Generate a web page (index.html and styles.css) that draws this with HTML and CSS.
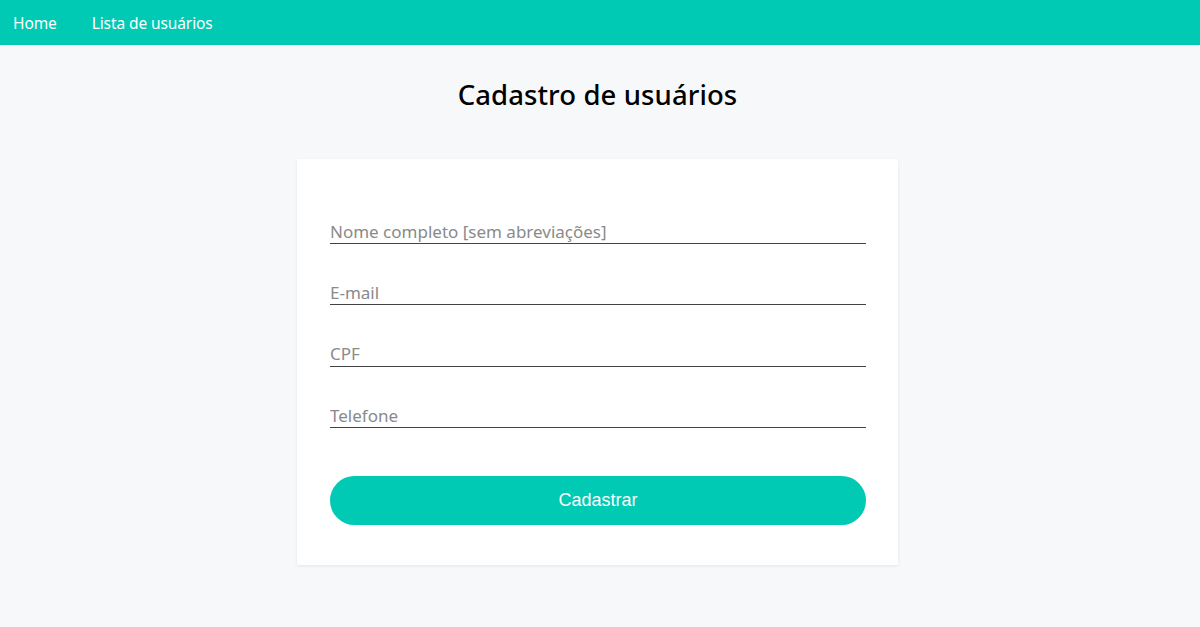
FILE: index.html
```html
<!DOCTYPE html>
<html lang="pt-BR">
<head>
<meta charset="utf-8">
<title>Cadastro de usuários</title>
<link rel="stylesheet" href="styles.css">
</head>
<body>
<nav class="topbar">
  <a class="nav-link" href="#">Home</a>
  <a class="nav-link" href="#">Lista de usuários</a>
</nav>
<main class="page">
  <h1 class="title">Cadastro de usuários</h1>
  <form class="card">
    <input class="field" type="text" placeholder="Nome completo [sem abreviações]">
    <input class="field" type="email" placeholder="E-mail">
    <input class="field" type="text" placeholder="CPF">
    <input class="field" type="tel" placeholder="Telefone">
    <button class="submit" type="button">Cadastrar</button>
  </form>
</main>
</body>
</html>
```
FILE: styles.css
```css
* { box-sizing: border-box; }
html, body { margin: 0; padding: 0; }
body {
  background: #f7f8fa;
  font-family: "Noto Sans", "Open Sans", sans-serif;
  color: #000;
  height: 627px;
  overflow: hidden;
}
.topbar {
  height: 45px;
  background: #00c9b4;
  display: flex;
  align-items: center;
  padding: 0 13px;
  gap: 35px;
}
.nav-link {
  color: #fff;
  text-decoration: none;
  font-size: 15.5px;
  letter-spacing: -0.1px;
}
.page {
  display: flex;
  flex-direction: column;
  align-items: center;
  padding-right: 5px;
}
.title {
  margin: 32px 0 46px;
  font-size: 27.5px;
  font-weight: 500;
  line-height: 36px;
  letter-spacing: 0.1px;
}
.card {
  width: 601px;
  background: #fff;
  box-shadow: 0 1px 3px rgba(0,0,0,0.08);
  padding: 54px 32px 40px 33px;
  display: flex;
  flex-direction: column;
  gap: 30.4px;
}
.field {
  border: none;
  border-bottom: 1px solid #444;
  height: 31px;
  padding: 6px 0 0;
  font-family: "Noto Sans", "Open Sans", sans-serif;
  font-size: 17px;
  outline: none;
  background: transparent;
}
.field::placeholder { color: #8a8a8a; }
.submit {
  margin-top: 17px;
  height: 49px;
  border: none;
  border-radius: 25px;
  background: #00c9b4;
  color: #fff;
  font-family: "Liberation Sans", Arial, sans-serif;
  font-size: 18px;
}
```
